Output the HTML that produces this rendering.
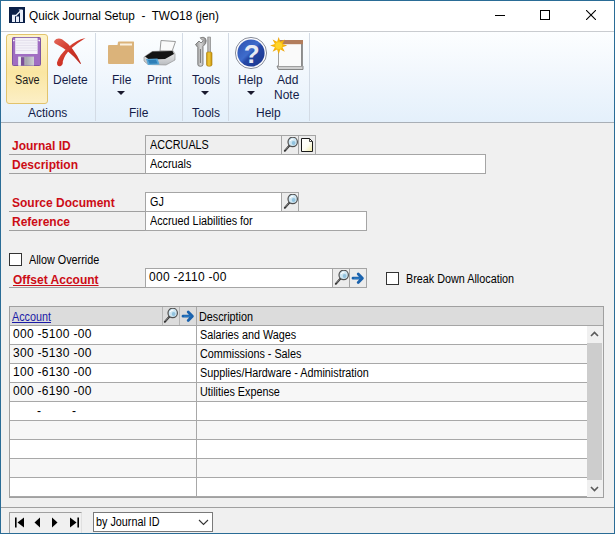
<!DOCTYPE html>
<html><head><meta charset="utf-8">
<style>
*{margin:0;padding:0;box-sizing:border-box}
html,body{width:615px;height:534px;overflow:hidden;background:#f0f0f0}
body{position:relative;font-family:"Liberation Sans",sans-serif;color:#000}
.a{position:absolute}
.t{position:absolute;white-space:nowrap;line-height:1}
.frame{left:0;top:0;width:615px;height:534px;border:1px solid #2a6c96;pointer-events:none;z-index:50}
.title{left:1px;top:1px;width:613px;height:30px;background:#fff}
.ribbon{left:1px;top:31px;width:613px;height:92px;border-top:1px solid #c9ccd0;border-bottom:1px solid #a9afb6;background:linear-gradient(#fcfeff,#f3f8fd 40%,#e4f0fb)}
.sep{top:33px;width:1px;height:88px;background:#d3dbe5}
.rl{font-size:12px;color:#141c48}
.lbl{font-size:12px;font-weight:bold;color:#cc0c16}
.ul{height:1px;background:#a0a0a0}
.fld{background:#fff;border:1px solid #a5a5a5}
.ft{font-size:12px;color:#000;transform:scaleX(0.9);transform-origin:0 0}
.btn{background:#ececec;border:1px solid #a5a5a5}
.cb{width:13px;height:13px;border:1px solid #333;background:#fff}
.row{left:10px;width:577px;height:19px;border-bottom:1px solid #a8a8a8}
.tri{width:0;height:0;border-left:4px solid transparent;border-right:4px solid transparent;border-top:4px solid #1a1a2e}
</style></head><body>

<!-- title bar -->
<div class="a title"></div>
<svg class="a" style="left:9px;top:7px" width="16" height="16" viewBox="0 0 16 16">
<rect width="16" height="16" fill="#0b2048"/>
<rect x="3" y="9" width="3" height="6" fill="#e8eefa"/>
<rect x="7" y="9.5" width="3" height="5.5" fill="#e8eefa"/>
<rect x="11" y="3" width="3" height="12" fill="#e8eefa"/>
<path d="M3 8.5 H7 L12 3.5" stroke="#e8eefa" stroke-width="1.3" fill="none"/>
<path d="M9.5 2.5 H13.5 V6.5 Z" fill="#e8eefa"/>
</svg>
<div class="t" style="left:29px;top:10px;font-size:12px;color:#000;transform:scaleX(0.98);transform-origin:0 0">Quick Journal Setup&nbsp; -&nbsp; TWO18 (jen)</div>
<div class="a" style="left:495px;top:15px;width:10px;height:1px;background:#000"></div>
<div class="a" style="left:540px;top:10px;width:10px;height:10px;border:1px solid #000"></div>
<svg class="a" style="left:586px;top:10px" width="10" height="10" viewBox="0 0 10 10"><path d="M0 0L10 10M10 0L0 10" stroke="#000" stroke-width="1.1"/></svg>

<!-- ribbon -->
<div class="a ribbon"></div>
<div class="a sep" style="left:95px"></div>
<div class="a sep" style="left:182px"></div>
<div class="a sep" style="left:228px"></div>
<div class="a sep" style="left:309px"></div>

<div class="a" style="left:6px;top:34px;width:42px;height:70px;border:1px solid #e2c36c;border-radius:3px;background:linear-gradient(#fdf3c9,#fae6a2 55%,#fcefc6)"></div>

<!-- floppy -->
<svg class="a" style="left:12px;top:37px" width="29" height="29" viewBox="0 0 29 29">
<defs><linearGradient id="fg" x1="0" y1="0" x2="1" y2="0"><stop offset="0" stop-color="#d8d8dc"/><stop offset="0.5" stop-color="#a6a6ae"/><stop offset="1" stop-color="#cfcfd4"/></linearGradient></defs>
<path d="M0.5 1.5 Q0.5 0.5 1.5 0.5 H27.5 Q28.5 0.5 28.5 1.5 V27.5 Q28.5 28.5 27.5 28.5 H1.5 Q0.5 28.5 0.5 27.5Z" fill="#a06dc2" stroke="#7d55a0" stroke-width="1"/>
<rect x="3.2" y="0.8" width="22.4" height="16.2" fill="#f3f1f8"/>
<path d="M3.5 3.5H25.5M3.5 6H25.5M3.5 8.5H25.5M3.5 11H25.5M3.5 13.5H25.5" stroke="#dcd6e6" stroke-width="0.6"/>
<rect x="6.2" y="19.6" width="15.8" height="9" fill="url(#fg)"/>
<rect x="6.4" y="19.8" width="2.4" height="8.8" fill="#eeeef2"/>
<rect x="9" y="20.2" width="3.3" height="8.4" fill="#7b4f98"/>
<circle cx="1.8" cy="3.6" r="0.8" fill="#fff"/><circle cx="27.2" cy="3.6" r="0.8" fill="#fff"/>
</svg>
<!-- delete X -->
<svg class="a" style="left:52px;top:36px" width="36" height="32" viewBox="0 0 36 32">
<defs><linearGradient id="xg" x1="0" y1="0" x2="1" y2="1"><stop offset="0" stop-color="#e4685a"/><stop offset="0.5" stop-color="#cf3426"/><stop offset="1" stop-color="#b82a20"/></linearGradient></defs>
<path d="M2.2 5 Q5 1.2 10 3.2 Q22 11 29 27.5 Q28.5 28.5 27.5 27 Q18 15 5 8.5 Q1.5 7 2.2 5Z" fill="url(#xg)"/>
<path d="M33.5 2 Q24 4 16 11.5 Q7.5 18.5 5 26.5 Q4.8 30.8 8.3 30.2 Q11.2 29.2 10.8 25.5 Q13 18 19 12.5 Q26 6.5 33.5 2Z" fill="url(#xg)"/>
</svg>
<div class="t rl" style="left:15px;top:74px;color:#1a1a1a;transform:scaleX(0.9);transform-origin:0 0">Save</div>
<div class="t rl" style="left:53px;top:74px">Delete</div>
<div class="t rl" style="left:28px;top:107px">Actions</div>

<!-- folder -->
<svg class="a" style="left:108px;top:41px" width="27" height="23" viewBox="0 0 27 23">
<path d="M10 1 Q10 0.5 11 0.5 H25.5 Q26 0.5 26 1 V22 Q26 23 25 23 H1 Q0 23 0 22 V5 Q0 4 1 4 H9.5Z" fill="#dbb37a"/>
<rect x="12" y="2.5" width="12" height="2" fill="#fbf1e0"/>
</svg>
<!-- printer -->
<svg class="a" style="left:140px;top:36px" width="40" height="32" viewBox="0 0 40 32">
<defs><linearGradient id="pg" x1="0" y1="0" x2="0" y2="1"><stop offset="0" stop-color="#f2f2f2"/><stop offset="1" stop-color="#b9bcc0"/></linearGradient></defs>
<path d="M21 4.5 L35.5 5.5 L32 15.5 L20 15Z" fill="#fafafa" stroke="#8f8f8f" stroke-width="0.9"/>
<path d="M4 21 L12 15.5 L33 14.5 L35 18 L35 24 L26 29 L8 28.5 L4 25Z" fill="url(#pg)" stroke="#8a8a8a" stroke-width="0.6"/>
<path d="M5 20.5 L12.5 15.5 L32.5 15 L34 18 L25 23 L9 23.5Z" fill="#141414"/>
<path d="M6 23 L17.5 22.5 L19.5 28.5 L8 29Z" fill="#58a6d6"/>
<path d="M8 24 L16 23.8 L17.5 27.5 L9.5 27.8Z" fill="#2d7fb8"/>
</svg>
<div class="t rl" style="left:112px;top:74px">File</div>
<div class="t rl" style="left:147px;top:74px">Print</div>
<div class="a tri" style="left:117px;top:91px"></div>
<div class="t rl" style="left:129px;top:107px">File</div>

<!-- tools -->
<svg class="a" style="left:194px;top:36px" width="20" height="31" viewBox="0 0 20 31">
<defs><linearGradient id="wg" x1="0" y1="0" x2="1" y2="0"><stop offset="0" stop-color="#8c8c8c"/><stop offset="0.5" stop-color="#d6d6d6"/><stop offset="1" stop-color="#8a8a8a"/></linearGradient>
<linearGradient id="yg" x1="0" y1="0" x2="1" y2="0"><stop offset="0" stop-color="#c8960e"/><stop offset="0.45" stop-color="#f3cc3a"/><stop offset="1" stop-color="#c4900c"/></linearGradient></defs>
<path d="M1.5 8.5 L5 5 L7 7 L9.2 4.8 L6.2 1.8 Q9.5 0.4 11.5 2.5 Q12.8 4.5 11.6 7.5 L9 10.5 V28.5 Q9 30.3 6.3 30.3 Q3.8 30.3 3.8 28.5 V11.5 Z" fill="url(#wg)" stroke="#6a6a6a" stroke-width="0.8"/>
<path d="M6.4 13 V27" stroke="#777" stroke-width="1"/>
<rect x="13.8" y="1" width="2.6" height="15.5" fill="url(#wg)" stroke="#707070" stroke-width="0.5"/>
<path d="M12.5 17 Q12.5 16 14 16 H16.5 Q18 16 18 17 V28.8 Q18 30.3 15.2 30.3 Q12.5 30.3 12.5 28.8Z" fill="url(#yg)" stroke="#a87a0a" stroke-width="0.6"/>
</svg>
<div class="t rl" style="left:192px;top:74px">Tools</div>
<div class="a tri" style="left:201px;top:91px"></div>
<div class="t rl" style="left:192px;top:107px">Tools</div>

<!-- help -->
<svg class="a" style="left:235px;top:37px" width="32" height="32" viewBox="0 0 32 32">
<defs><linearGradient id="hg" x1="0" y1="0" x2="1" y2="1"><stop offset="0" stop-color="#2c4fae"/><stop offset="0.45" stop-color="#3e6ccc"/><stop offset="0.55" stop-color="#2447a6"/><stop offset="1" stop-color="#1b348a"/></linearGradient></defs>
<circle cx="16" cy="16" r="15.6" fill="#fbfbfd" stroke="#7d8290" stroke-width="0.9"/>
<circle cx="16" cy="16" r="13.6" fill="url(#hg)"/>
<text x="16.6" y="26" text-anchor="middle" font-family="Liberation Sans" font-weight="bold" font-size="26" fill="#e8ebf3">?</text>
</svg>
<!-- add note -->
<svg class="a" style="left:268px;top:34px" width="40" height="38" viewBox="0 0 40 38">
<defs><radialGradient id="sg"><stop offset="0" stop-color="#ffd21a"/><stop offset="0.6" stop-color="#f6b40a"/><stop offset="1" stop-color="#e89a10"/></radialGradient></defs>
<path d="M9 32 H35 V35.5 H10.5Z" fill="#cfcfcf" stroke="#7a7a7a" stroke-width="0.9"/>
<rect x="10.5" y="6.5" width="24" height="26" fill="#fafafa" stroke="#a0a0a0" stroke-width="1"/><rect x="33" y="7" width="1.6" height="25" fill="#8c8c8c"/>
<rect x="10" y="6" width="25" height="4.2" fill="#b27d5c"/>
<path d="M10.7 3 L12.3 7.8 L16.8 5.5 L14.5 10 L19.2 11.6 L14.5 13.2 L16.8 17.8 L12.3 15.5 L10.7 20.3 L9.1 15.5 L4.6 17.8 L6.9 13.2 L2.2 11.6 L6.9 10 L4.6 5.5 L9.1 7.8Z" fill="url(#sg)"/>
<circle cx="10.7" cy="11.6" r="3.4" fill="#ffd428"/>
</svg>
<div class="t rl" style="left:238px;top:74px">Help</div>
<div class="a tri" style="left:247px;top:91px"></div>
<div class="t rl" style="left:277px;top:74px">Add</div>
<div class="t rl" style="left:274px;top:89px">Note</div>
<div class="t rl" style="left:256px;top:107px">Help</div>

<!-- form -->
<div class="a ul" style="left:9px;top:154px;width:136px"></div>
<div class="a ul" style="left:9px;top:173px;width:136px"></div>
<div class="t lbl" style="left:12px;top:140px">Journal ID</div>
<div class="t lbl" style="left:12px;top:159px">Description</div>

<div class="a fld" style="left:145px;top:135px;width:137px;height:20px;background:#efefef"></div>
<div class="a btn" style="left:281px;top:135px;width:18px;height:20px"></div>
<div class="a btn" style="left:298px;top:135px;width:18px;height:20px"></div>
<div class="t ft" style="left:150px;top:139px">ACCRUALS</div>
<div class="a fld" style="left:145px;top:154px;width:341px;height:20px"></div>
<div class="t ft" style="left:150px;top:158px">Accruals</div>

<div class="a ul" style="left:9px;top:211px;width:136px"></div>
<div class="a ul" style="left:9px;top:230px;width:136px"></div>
<div class="t lbl" style="left:12px;top:197px">Source Document</div>
<div class="t lbl" style="left:12px;top:216px">Reference</div>
<div class="a fld" style="left:145px;top:192px;width:137px;height:20px"></div>
<div class="a btn" style="left:281px;top:192px;width:18px;height:20px"></div>
<div class="t ft" style="left:150px;top:196px">GJ</div>
<div class="a fld" style="left:145px;top:211px;width:222px;height:20px"></div>
<div class="t ft" style="left:150px;top:215px">Accrued Liabilities for</div>

<div class="a cb" style="left:9px;top:253px"></div>
<div class="t ft" style="left:29px;top:254px">Allow Override</div>
<div class="a ul" style="left:9px;top:287px;width:136px"></div>
<div class="t lbl" style="left:13px;top:274px;text-decoration:underline">Offset Account</div>
<div class="a fld" style="left:145px;top:268px;width:188px;height:20px"></div>
<div class="a btn" style="left:332px;top:268px;width:18px;height:20px"></div>
<div class="a btn" style="left:349px;top:268px;width:18px;height:20px"></div>
<div class="t" style="left:149px;top:271px;font-size:12px;letter-spacing:0.3px">000 -2110 -00</div>
<div class="a cb" style="left:386px;top:272px"></div>
<div class="t ft" style="left:406px;top:273px">Break Down Allocation</div>

<svg class="a" style="left:283px;top:137px" width="16" height="16" viewBox="0 0 16 16">
<path d="M6.2 8.8 L1.8 13.8" stroke="#222" stroke-width="1.9" stroke-linecap="round"/>
<path d="M5.7 9.4 L2.2 13.3" stroke="#e6e6e6" stroke-width="0.55"/>
<circle cx="9.7" cy="4.9" r="4.7" fill="#cfe6f2" stroke="#505050" stroke-width="1.2"/>
<path d="M7.2 3.9 Q8.2 2.1 10.4 2.3" stroke="#ffffff" stroke-width="1.1" fill="none"/><circle cx="10.6" cy="6" r="1.9" fill="#93c3de"/>
</svg><svg class="a" style="left:300px;top:137px" width="14" height="16" viewBox="0 0 14 16">
<defs><linearGradient id="ng" x1="0" y1="0" x2="1" y2="1"><stop offset="0" stop-color="#ffffff"/><stop offset="0.55" stop-color="#fdfdf6"/><stop offset="1" stop-color="#f1eba0"/></linearGradient></defs><path d="M1.5 1.5 H9.5 L12.5 4.5 V14.5 H1.5Z" fill="url(#ng)" stroke="#1a1a1a" stroke-width="1"/>
<path d="M9.5 1.5 V4.5 H12.5" fill="none" stroke="#1a1a1a" stroke-width="0.8"/>
</svg><svg class="a" style="left:283px;top:194px" width="16" height="16" viewBox="0 0 16 16">
<path d="M6.2 8.8 L1.8 13.8" stroke="#222" stroke-width="1.9" stroke-linecap="round"/>
<path d="M5.7 9.4 L2.2 13.3" stroke="#e6e6e6" stroke-width="0.55"/>
<circle cx="9.7" cy="4.9" r="4.7" fill="#cfe6f2" stroke="#505050" stroke-width="1.2"/>
<path d="M7.2 3.9 Q8.2 2.1 10.4 2.3" stroke="#ffffff" stroke-width="1.1" fill="none"/><circle cx="10.6" cy="6" r="1.9" fill="#93c3de"/>
</svg><svg class="a" style="left:334px;top:270px" width="16" height="16" viewBox="0 0 16 16">
<path d="M6.2 8.8 L1.8 13.8" stroke="#222" stroke-width="1.9" stroke-linecap="round"/>
<path d="M5.7 9.4 L2.2 13.3" stroke="#e6e6e6" stroke-width="0.55"/>
<circle cx="9.7" cy="4.9" r="4.7" fill="#cfe6f2" stroke="#505050" stroke-width="1.2"/>
<path d="M7.2 3.9 Q8.2 2.1 10.4 2.3" stroke="#ffffff" stroke-width="1.1" fill="none"/><circle cx="10.6" cy="6" r="1.9" fill="#93c3de"/>
</svg><svg class="a" style="left:351px;top:272px" width="14" height="14" viewBox="0 0 14 14">
<path d="M2 6.2 H10.5 M7.2 2 L11.4 6.2 L7.2 10.4" stroke="#1a62ad" stroke-width="2.8" stroke-linecap="round" stroke-linejoin="round" fill="none"/><path d="M3 6.2 H9.5" stroke="#3a8ad0" stroke-width="0.8"/>
</svg><!-- grid -->
<div class="a" style="left:9px;top:306px;width:595px;height:192px;border:1px solid #a0a0a0;background:#fff"></div>
<div class="a" style="left:10px;top:307px;width:593px;height:19px;background:#dcdcdc;border-bottom:1px solid #a5a5a5"></div>
<div class="a" style="left:162px;top:307px;width:1px;height:18px;background:#b5b5b5"></div>
<div class="a" style="left:179px;top:307px;width:1px;height:18px;background:#b5b5b5"></div>
<svg class="a" style="left:163px;top:308px" width="16" height="16" viewBox="0 0 16 16">
<path d="M6.2 8.8 L1.8 13.8" stroke="#222" stroke-width="1.9" stroke-linecap="round"/>
<path d="M5.7 9.4 L2.2 13.3" stroke="#e6e6e6" stroke-width="0.55"/>
<circle cx="9.7" cy="4.9" r="4.7" fill="#cfe6f2" stroke="#505050" stroke-width="1.2"/>
<path d="M7.2 3.9 Q8.2 2.1 10.4 2.3" stroke="#ffffff" stroke-width="1.1" fill="none"/><circle cx="10.6" cy="6" r="1.9" fill="#93c3de"/>
</svg><svg class="a" style="left:181px;top:310px" width="14" height="14" viewBox="0 0 14 14">
<path d="M2 6.2 H10.5 M7.2 2 L11.4 6.2 L7.2 10.4" stroke="#1a62ad" stroke-width="2.8" stroke-linecap="round" stroke-linejoin="round" fill="none"/><path d="M3 6.2 H9.5" stroke="#3a8ad0" stroke-width="0.8"/>
</svg>
<div class="t ft" style="left:12px;top:311px;color:#1a1aa6;text-decoration:underline">Account</div>
<div class="t ft" style="left:199px;top:311px">Description</div>

<div class="a row" style="top:326px;background:#fff"></div>
<div class="a row" style="top:345px;background:#f7f7f7"></div>
<div class="a row" style="top:364px;background:#fff"></div>
<div class="a row" style="top:383px;background:#f7f7f7"></div>
<div class="a row" style="top:402px;background:#fff"></div>
<div class="a row" style="top:421px;background:#f7f7f7"></div>
<div class="a row" style="top:440px;background:#fff"></div>
<div class="a row" style="top:459px;background:#f7f7f7"></div>
<div class="a row" style="top:478px;background:#fff"></div>
<div class="a" style="left:196px;top:307px;width:1px;height:190px;background:#a8a8a8"></div>

<div class="t" style="left:13px;top:328px;font-size:12px;letter-spacing:0.3px">000 -5100 -00</div>
<div class="t" style="left:13px;top:347px;font-size:12px;letter-spacing:0.3px">300 -5130 -00</div>
<div class="t" style="left:13px;top:366px;font-size:12px;letter-spacing:0.3px">100 -6130 -00</div>
<div class="t" style="left:13px;top:385px;font-size:12px;letter-spacing:0.3px">000 -6190 -00</div>
<div class="t" style="left:37px;top:405px;font-size:12px">-</div>
<div class="t" style="left:72px;top:405px;font-size:12px">-</div>
<div class="t ft" style="left:200px;top:329px">Salaries and Wages</div>
<div class="t ft" style="left:200px;top:348px">Commissions - Sales</div>
<div class="t ft" style="left:200px;top:367px">Supplies/Hardware - Administration</div>
<div class="t ft" style="left:200px;top:386px">Utilities Expense</div>

<!-- scrollbar -->
<div class="a" style="left:587px;top:326px;width:16px;height:171px;background:#f0f0f0"></div>
<div class="a" style="left:587px;top:343px;width:15px;height:137px;background:#cdcdcd"></div>
<svg class="a" style="left:590px;top:331px" width="9" height="6" viewBox="0 0 9 6"><path d="M1 5 L4.5 1.5 L8 5" stroke="#5a5a5a" stroke-width="1.6" fill="none"/></svg>
<svg class="a" style="left:590px;top:486px" width="9" height="6" viewBox="0 0 9 6"><path d="M1 1 L4.5 4.5 L8 1" stroke="#5a5a5a" stroke-width="1.6" fill="none"/></svg>

<!-- status bar -->
<div class="a" style="left:1px;top:507px;width:613px;height:1px;background:#a0a0a0"></div>
<div class="a" style="left:9px;top:512px;width:73px;height:22px;border-top:1px solid #a0a0a0;border-left:1px solid #a0a0a0;border-right:1px solid #e0e0e0"></div>
<svg class="a" style="left:14px;top:517px" width="68" height="11" viewBox="0 0 68 11">
<rect x="1" y="0.5" width="1.6" height="10" fill="#000"/><path d="M10 0.5 V10.5 L3.5 5.5Z" fill="#000"/>
<path d="M26 0.5 V10.5 L20.5 5.5Z" fill="#000"/>
<path d="M38 0.5 V10.5 L43.5 5.5Z" fill="#000"/>
<path d="M56 0.5 V10.5 L62.5 5.5Z" fill="#000"/><rect x="63.4" y="0.5" width="1.6" height="10" fill="#000"/>
</svg>
<div class="a" style="left:93px;top:512px;width:120px;height:20px;border:1px solid #7a7a7a;background:#fff"></div>
<div class="t ft" style="left:96px;top:516px">by Journal ID</div>
<svg class="a" style="left:198px;top:519px" width="11" height="7" viewBox="0 0 11 7"><path d="M1 1 L5.5 5.5 L10 1" stroke="#333" stroke-width="1.1" fill="none"/></svg>

<div class="a frame"></div>
</body></html>
